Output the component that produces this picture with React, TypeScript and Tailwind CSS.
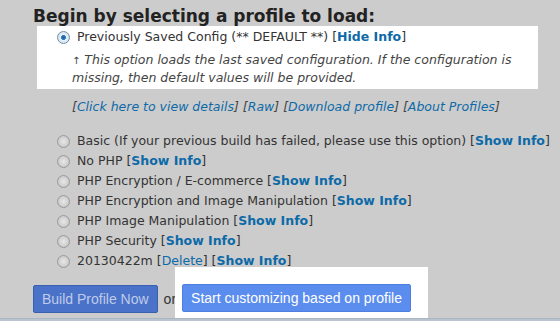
const Radio = ({ checked }: { checked?: boolean }) => (
  <span
    className={
      "inline-block w-[13px] h-[13px] rounded-full border shrink-0 " +
      (checked
        ? "border-[#6f8fa8] bg-[radial-gradient(circle,#1f5f99_0,#2c7ac0_28%,#e8f2fa_34%,#c9d8e4_100%)]"
        : "border-[#9a9a9a] bg-[radial-gradient(circle,#e8e8e8_0,#cfcfcf_60%,#b8b8b8_100%)]")
    }
  />
);

const Info = ({ label = "Show Info" }: { label?: string }) => (
  <>
    [<a className="text-[#0c6aa8] font-bold">{label}</a>]
  </>
);

const options: { name: React.ReactNode }[] = [
  { name: <>Basic (If your previous build has failed, please use this option) <Info /></> },
  { name: <>No PHP <Info /></> },
  { name: <>PHP Encryption / E-commerce <Info /></> },
  { name: <>PHP Encryption and Image Manipulation <Info /></> },
  { name: <>PHP Image Manipulation <Info /></> },
  { name: <>PHP Security <Info /></> },
  {
    name: (
      <>
        20130422m [<a className="text-[#0c6aa8]">Delete</a>] <Info />
      </>
    ),
  },
];

export default function App() {
  return (
    <div className="w-[560px] h-[321px] bg-[#cccccc] overflow-hidden relative font-['DejaVu_Sans',sans-serif] text-[#333333]">
      <h1 className="pl-[33px] pt-[7px] text-[17px] leading-[19px] font-bold text-[#222222] whitespace-nowrap">
        Begin by selecting a profile to load:
      </h1>

      <div className="ml-[37px] w-[501px] h-[63px] bg-white pt-[2px]">
        <div className="flex items-center gap-[7px] pl-[20px] text-[12.5px] leading-[18px] whitespace-nowrap">
          <Radio checked />
          <span>
            Previously Saved Config (** DEFAULT **) <Info label="Hide Info" />
          </span>
        </div>
        <p className="pl-[35px] pt-[5px] italic text-[12.5px] leading-[17px] text-[#444444] whitespace-nowrap">
          <span className="text-[10px] not-italic">↑</span> This option loads the last saved configuration. If the configuration is
          <br />
          missing, then default values will be provided.
        </p>
      </div>

      <p className="pl-[72px] pt-[9px] italic text-[12.5px] leading-[18px] text-[#444444] whitespace-nowrap">
        [<a className="text-[#0c6aa8]">Click here to view details</a>] [<a className="text-[#0c6aa8]">Raw</a>] [
        <a className="text-[#0c6aa8]">Download profile</a>] [<a className="text-[#0c6aa8]">About Profiles</a>]
      </p>

      <ul className="pt-[15px] pl-[57px] text-[12.5px] leading-[20px] whitespace-nowrap">
        {options.map((o, i) => (
          <li key={i} className="flex items-center gap-[7px]">
            <Radio />
            <span>{o.name}</span>
          </li>
        ))}
      </ul>

      <div className="flex items-end mt-[-4px] font-['Liberation_Sans',sans-serif]">
        <div className="pl-[33px] pb-[6px] flex items-center">
          <button className="h-[28px] px-[8px] bg-[#4a72c9] border border-[#3a5fb0] rounded-[2px] text-[#bfcbe8] text-[14px]">
            Build Profile Now
          </button>
          <span className="ml-[6px] text-[14px] text-[#333333]">or</span>
        </div>
        <div className="ml-[-1px] w-[253px] h-[52px] bg-white pl-[7px] pt-[17px]">
          <button className="h-[28px] px-[8px] bg-[#5b8def] border border-[#4c7fe0] rounded-[2px] text-white text-[14px]">
            Start customizing based on profile
          </button>
        </div>
      </div>
      <div className="absolute left-0 bottom-0 w-full h-[3px] bg-[#b9c4cf] border-t border-[#a9b6c4]" />
    </div>
  );
}
